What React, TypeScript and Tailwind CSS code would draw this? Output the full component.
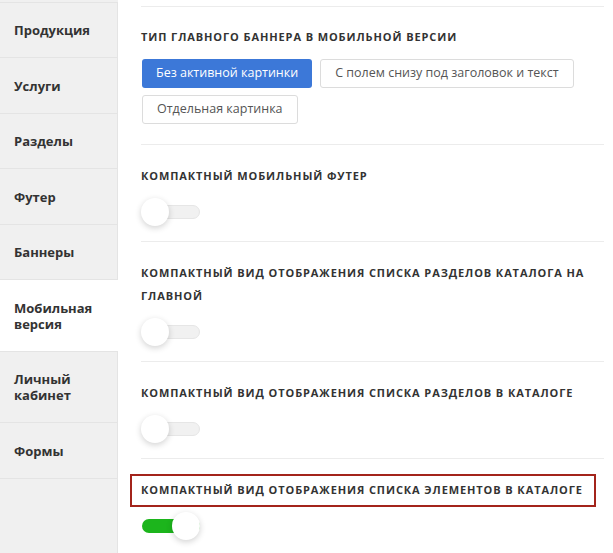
import React from "react";

const font = { fontFamily: '"Open Sans", "Liberation Sans", sans-serif' };

const menu = [
  { label: "Продукция" },
  { label: "Услуги" },
  { label: "Разделы" },
  { label: "Футер" },
  { label: "Баннеры" },
  { label: "Мобильная\nверсия", active: true },
  { label: "Личный\nкабинет" },
  { label: "Формы" },
];

function Toggle({ on = false }: { on?: boolean }) {
  return (
    <div className="relative h-[28px] w-[60px]">
      <div
        className={
          on
            ? "absolute left-[1px] top-[7px] h-[14px] w-[58px] rounded-full bg-[#1cb51c]"
            : "absolute left-[1px] top-[7px] h-[14px] w-[58px] rounded-full border border-[#e6e6e6] bg-[#f1f1f1]"
        }
      />
      <div
        className={
          on
            ? "absolute left-[31px] top-0 h-[28px] w-[28px] rounded-full bg-white shadow-[0_2px_6px_rgba(0,0,0,0.18)]"
            : "absolute left-0 top-0 h-[28px] w-[28px] rounded-full bg-white shadow-[0_2px_6px_rgba(0,0,0,0.18)]"
        }
      />
    </div>
  );
}

function Heading({ children }: { children: React.ReactNode }) {
  return (
    <div className="text-[11px] font-bold uppercase leading-[23px] tracking-[0.9px] text-[#333]">
      {children}
    </div>
  );
}

export default function App() {
  return (
    <div className="flex h-[553px] w-[613px] overflow-hidden bg-white" style={font}>
      {/* Side menu */}
      <div className="flex w-[118px] shrink-0 flex-col bg-[#f0f0f0] pt-[1.5px]">
        {menu.map((item) => (
          <div
            key={item.label}
            className={
              item.active
                ? "whitespace-pre-line border-t border-[#e4e4e4] bg-white px-[14px] pb-[19px] pt-[19.5px] text-[13px] font-bold leading-[16px] text-[#333]"
                : "whitespace-pre-line border-r border-t border-[#e4e4e4] px-[14px] pb-[19px] pt-[19.5px] text-[13px] font-bold leading-[16px] text-[#333]"
            }
          >
            {item.label}
          </div>
        ))}
        <div className="flex-1 border-r border-t border-[#e4e4e4]" />
      </div>

      {/* Settings list */}
      <div className="flex-1 pl-[23px] pr-[9px] pt-[6px]">
        <div className="border-t border-[#ececec] pb-[20px] pt-[18px]">
          <Heading>Тип главного баннера в мобильной версии</Heading>
          <div className="mt-[11px] flex flex-wrap gap-x-[8px] gap-y-[7px] pl-[1px] text-[12.5px] text-[#555]">
            <button className="h-[29px] rounded-[3px] bg-[#3c78d8] px-[14px] text-white">
              Без активной картинки
            </button>
            <button className="h-[29px] rounded-[3px] border border-[#dcdcdc] bg-white px-[14px]">
              С полем снизу под заголовок и текст
            </button>
            <button className="h-[29px] rounded-[3px] border border-[#dcdcdc] bg-white px-[14px]">
              Отдельная картинка
            </button>
          </div>
        </div>

        <div className="border-t border-[#ececec] pb-[15px] pt-[19px]">
          <Heading>Компактный мобильный футер</Heading>
          <div className="mt-[11px]">
            <Toggle />
          </div>
        </div>

        <div className="border-t border-[#ececec] pb-[15px] pt-[19px]">
          <Heading>Компактный вид отображения списка разделов каталога на главной</Heading>
          <div className="mt-[11px]">
            <Toggle />
          </div>
        </div>

        <div className="border-t border-[#ececec] pb-[15px] pt-[19px]">
          <Heading>Компактный вид отображения списка разделов в каталоге</Heading>
          <div className="mt-[11px]">
            <Toggle />
          </div>
        </div>

        <div className="border-t border-[#ececec] pb-[15px] pt-[19px]">
          <div className="relative">
            <Heading>Компактный вид отображения списка элементов в каталоге</Heading>
            {/* highlight frame */}
            <div className="absolute -left-[11px] -top-[4px] -bottom-[6px] right-[8px] border-2 border-[#a3241b]" />
          </div>
          <div className="mt-[11px]">
            <Toggle on />
          </div>
        </div>
      </div>
    </div>
  );
}
